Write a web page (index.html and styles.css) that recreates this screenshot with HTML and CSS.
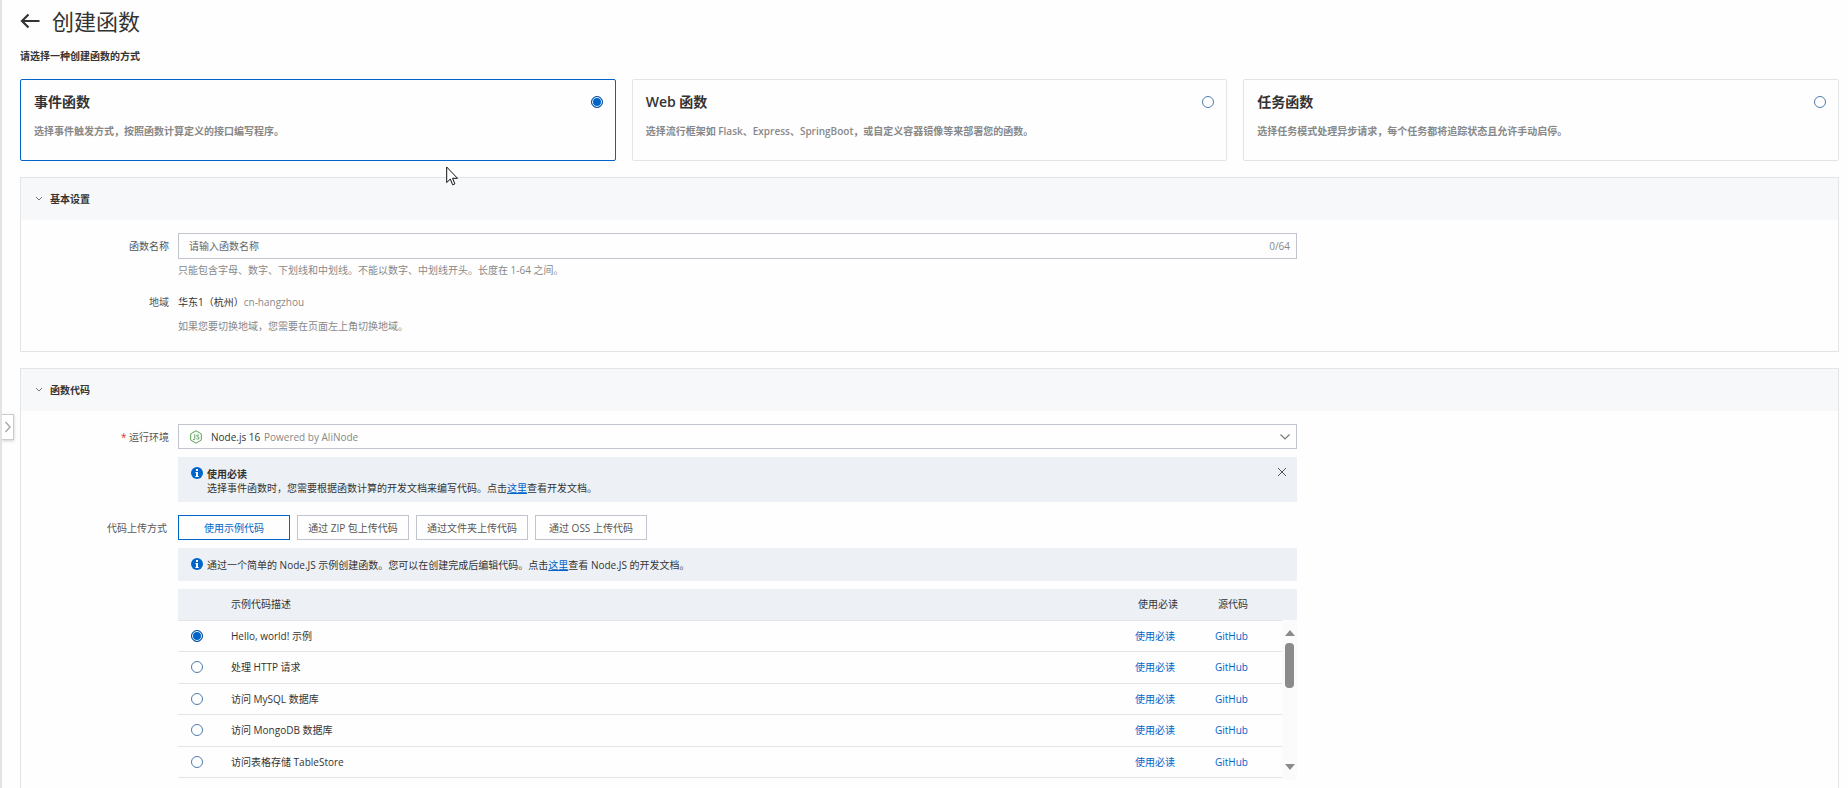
FILE: index.html
```html
<!DOCTYPE html>
<html lang="zh-CN">
<head>
<meta charset="utf-8">
<title>创建函数</title>
<link rel="stylesheet" href="styles.css">
</head>
<body>
<div class="page">
  <button class="drawer-toggle" type="button" aria-label="展开侧栏">
    <svg width="8" height="12" viewBox="0 0 8 12"><path d="M1.500 1l4.500 5-4.500 5" fill="none" stroke="#aaa" stroke-width="1.500"/></svg>
  </button>
  <main class="content">
    <header class="page-header">
      <a class="back" href="#" aria-label="返回">
        <svg width="20" height="18" viewBox="0 0 20 18"><path d="M8.500 2.500L2 9l6.500 6.500M2 9h17.500" fill="none" stroke="#333" stroke-width="2.200"/></svg>
      </a>
      <h1>创建函数</h1>
    </header>
    <p class="lead" id="lead">请选择一种创建函数的方式</p>

    <div class="cards" role="radiogroup" aria-labelledby="lead">
      <label class="card card-selected">
        <span class="card-head"><span class="card-title">事件函数</span><input class="radio" type="radio" name="kind" checked></span>
        <span class="card-desc">选择事件触发方式，按照函数计算定义的接口编写程序。</span>
      </label>
      <label class="card">
        <span class="card-head"><span class="card-title">Web 函数</span><input class="radio" type="radio" name="kind"></span>
        <span class="card-desc">选择流行框架如 Flask、Express、SpringBoot，或自定义容器镜像等来部署您的函数。</span>
      </label>
      <label class="card">
        <span class="card-head"><span class="card-title">任务函数</span><input class="radio" type="radio" name="kind"></span>
        <span class="card-desc">选择任务模式处理异步请求，每个任务都将追踪状态且允许手动启停。</span>
      </label>
    </div>

    <section class="panel">
      <h2 class="panel-title">
        <svg width="8" height="6" viewBox="0 0 8 6"><path d="M1 1l3 3 3-3" fill="none" stroke="#777"/></svg>
        基本设置
      </h2>
      <div class="panel-body">
        <div class="row">
          <label class="label" for="fn-name">函数名称</label>
          <div class="control">
            <div class="textbox">
              <input id="fn-name" type="text" placeholder="请输入函数名称">
              <span class="count">0/64</span>
            </div>
            <p class="hint">只能包含字母、数字、下划线和中划线。不能以数字、中划线开头。长度在 1-64 之间。</p>
          </div>
        </div>
        <div class="row row-region">
          <span class="label">地域</span>
          <div class="control">
            <p class="region">华东1（杭州）<span class="muted">cn-hangzhou</span></p>
            <p class="hint">如果您要切换地域，您需要在页面左上角切换地域。</p>
          </div>
        </div>
      </div>
    </section>

    <section class="panel">
      <h2 class="panel-title">
        <svg width="8" height="6" viewBox="0 0 8 6"><path d="M1 1l3 3 3-3" fill="none" stroke="#777"/></svg>
        函数代码
      </h2>
      <div class="panel-body">
        <div class="row">
          <label class="label" for="runtime"><span class="required">*</span> 运行环境</label>
          <div class="control">
            <div class="selectbox">
              <select id="runtime"><option>Node.js 16</option></select>
              <span class="select-icon"><svg width="14" height="14" viewBox="0 0 14 14" fill="none" stroke="#5fa35a"><path d="M7 .8l5.300 3.100v6.200L7 13.200 1.700 10.100V3.900z"/><path d="M5.800 4.200v4.600q0 1.400-1.800.8M10 5.200q-2.400-.8-2.400.6c0 1.400 2.600.7 2.600 2.200 0 1.400-2 1.300-2.800.7"/></svg></span>
              <span class="select-note muted">Powered by AliNode</span>
              <span class="select-arrow"><svg width="12" height="8" viewBox="0 0 12 8"><path d="M1.500 1.500L6 6l4.500-4.500" fill="none" stroke="#777" stroke-width="1.200"/></svg></span>
            </div>
            <div class="notice notice-tall">
              <svg class="info" width="12" height="12" viewBox="0 0 12 12"><circle cx="6" cy="6" r="6" fill="#0064c8"/><path d="M5 2h2v2H5zM4.500 5H7v4h.7v1H4.300V9H5V6h-.5z" fill="#fff"/></svg>
              <div class="notice-text"><strong>使用必读</strong><br>选择事件函数时，您需要根据函数计算的开发文档来编写代码。点击<a class="doc" href="#">这里</a>查看开发文档。</div>
              <button class="close" type="button" aria-label="关闭"><svg width="10" height="10" viewBox="0 0 10 10"><path d="M1 1l8 8M9 1L1 9" fill="none" stroke="#555"/></svg></button>
            </div>
          </div>
        </div>
        <div class="row row-upload">
          <span class="label label-wide">代码上传方式</span>
          <div class="control">
            <div class="tabs">
              <button class="tab tab-active" type="button">使用示例代码</button>
              <button class="tab" type="button">通过 ZIP 包上传代码</button>
              <button class="tab" type="button">通过文件夹上传代码</button>
              <button class="tab" type="button">通过 OSS 上传代码</button>
            </div>
            <div class="notice">
              <svg class="info" width="12" height="12" viewBox="0 0 12 12"><circle cx="6" cy="6" r="6" fill="#0064c8"/><path d="M5 2h2v2H5zM4.500 5H7v4h.7v1H4.300V9H5V6h-.5z" fill="#fff"/></svg>
              <div class="notice-text">通过一个简单的 Node.JS 示例创建函数。您可以在创建完成后编辑代码。点击<a class="doc" href="#">这里</a>查看 Node.JS 的开发文档。</div>
            </div>
            <div class="table-wrap">
              <table class="samples">
                <thead><tr><th class="pick"></th><th>示例代码描述</th><th class="read">使用必读</th><th class="source">源代码</th></tr></thead>
                <tbody>
                  <tr><td class="pick"><input class="radio" type="radio" name="sample" id="s1" checked></td><td><label for="s1">Hello, world! 示例</label></td><td><a href="#">使用必读</a></td><td><a href="#">GitHub</a></td></tr>
                  <tr><td class="pick"><input class="radio" type="radio" name="sample" id="s2"></td><td><label for="s2">处理 HTTP 请求</label></td><td><a href="#">使用必读</a></td><td><a href="#">GitHub</a></td></tr>
                  <tr><td class="pick"><input class="radio" type="radio" name="sample" id="s3"></td><td><label for="s3">访问 MySQL 数据库</label></td><td><a href="#">使用必读</a></td><td><a href="#">GitHub</a></td></tr>
                  <tr><td class="pick"><input class="radio" type="radio" name="sample" id="s4"></td><td><label for="s4">访问 MongoDB 数据库</label></td><td><a href="#">使用必读</a></td><td><a href="#">GitHub</a></td></tr>
                  <tr><td class="pick"><input class="radio" type="radio" name="sample" id="s5"></td><td><label for="s5">访问表格存储 TableStore</label></td><td><a href="#">使用必读</a></td><td><a href="#">GitHub</a></td></tr>
                </tbody>
              </table>
              <div class="scrollbar" aria-hidden="true">
                <svg width="10" height="6" viewBox="0 0 10 6"><path d="M5 0l5 6H0z" fill="#8b8b8b"/></svg>
                <span class="thumb"></span>
                <svg class="arrow-down" width="10" height="6" viewBox="0 0 10 6"><path d="M5 6l5-6H0z" fill="#8b8b8b"/></svg>
              </div>
            </div>
          </div>
        </div>
      </div>
    </section>
  </main>
  <svg class="pointer" width="13" height="20" viewBox="0 0 13 20"><path d="M.7 1v15.500l3.600-3.400 2.400 5.700 2.200-1-2.400-5.500h5z" fill="#fff" stroke="#111"/></svg>
</div>
</body>
</html>
```
FILE: styles.css
```css
* {
  box-sizing: border-box;
}

body {
  margin: 0;
  background: #fefefe;
  color: #333;
  font: 10px/14px "Open Sans", "Noto Sans CJK SC", sans-serif;
}

h1, h2, p {
  margin: 0;
}

button, input, select {
  color: inherit;
  font: inherit;
}

a {
  color: #0064c8;
  text-decoration: none;
}

.muted {
  color: #888;
}

.page {
  position: relative;
  height: 100vh;
  overflow: hidden;
  border-left: 2px solid #e3e3e3;
}

.drawer-toggle {
  position: absolute;
  top: 414px;
  left: 0;
  display: grid;
  place-items: center;
  width: 12px;
  height: 26px;
  padding: 0;
  border: 1px solid #ccc;
  border-left: 0;
  background: #fff;
  box-shadow: 0 1px 3px #0003;
}

.pointer {
  position: absolute;
  top: 166px;
  left: 444px;
}

.content {
  padding: 5px 9px 0 18px;
}

.page-header {
  display: flex;
  align-items: center;
  gap: 12px;
  height: 32px;
}

.back {
  display: flex;
}

h1 {
  font-size: 22px;
  font-weight: 400;
  line-height: 30px;
}

.lead {
  margin: 12px 0 16px;
  font-weight: 600;
}

.cards {
  display: grid;
  grid-template-columns: repeat(3, 1fr);
  gap: 16px;
  margin-bottom: 16px;
}

.card {
  display: block;
  height: 82px;
  padding: 12px;
  padding-left: 13px;
  border: 1px solid #e3e4e6;
  border-radius: 2px;
}

.card-selected {
  border-color: #0064c8;
}

.card-head {
  display: flex;
  align-items: center;
  justify-content: space-between;
  margin-bottom: 12px;
}

.card-title {
  font-size: 14px;
  font-weight: 600;
  line-height: 20px;
}

.card-desc {
  display: block;
  color: #888;
  font-weight: 600;
}

.radio {
  appearance: none;
  width: 12px;
  height: 12px;
  margin: 0;
  border: 1px solid #4f7cac;
  border-radius: 50%;
  background: #fff;
}

.radio:checked {
  border-color: #0050a0;
  background: #0064c8;
  box-shadow: inset 0 0 0 1px #fff;
}

.panel {
  margin-bottom: 16px;
  border: 1px solid #e3e4e6;
}

.panel-title {
  display: flex;
  align-items: center;
  gap: 7px;
  height: 42px;
  padding-left: 14px;
  background: #f7f8fa;
  font-size: 10px;
  font-weight: 700;
}

.panel-body {
  padding: 13px 0 18px;
}

.row {
  display: grid;
  grid-template-columns: 157px 1119fr 541fr;
}

.label {
  padding-right: 9px;
  color: #555;
  line-height: 26px;
  text-align: right;
}

.label-wide {
  padding-right: 11px;
}

.required {
  color: #d93026;
}

.textbox {
  display: flex;
  align-items: center;
  height: 26px;
  padding: 0 6px 0 10px;
  border: 1px solid #c0c4cc;
}

.textbox input {
  flex: 1;
  min-width: 0;
  padding: 0;
  border: 0;
  outline: 0;
  background: none;
}

.textbox input::placeholder {
  color: #666;
}

.count {
  color: #888;
}

.hint {
  margin-top: 4px;
  color: #888;
}

.row-region {
  margin-top: 12px;
}

.region {
  line-height: 26px;
}

.selectbox {
  position: relative;
}

.selectbox select {
  display: block;
  appearance: none;
  width: 100%;
  height: 25px;
  padding: 0 32px;
  border: 1px solid #c0c4cc;
  border-radius: 0;
  background: #fefefe;
}

.select-icon,
.select-note,
.select-arrow {
  position: absolute;
  top: 0;
  display: flex;
  align-items: center;
  height: 25px;
  pointer-events: none;
}

.select-icon {
  left: 11px;
}

.select-note {
  left: 86px;
}

.select-arrow {
  right: 6px;
}

.notice {
  display: flex;
  align-items: flex-start;
  gap: 4px;
  margin-top: 8px;
  padding: 10px 10px 9px 13px;
  background: #edf1f6;
}

.notice-tall {
  padding-bottom: 7px;
}

.notice-text {
  flex: 1;
}

.info {
  flex: none;
}

.doc {
  text-decoration: underline;
}

.close {
  display: flex;
  padding: 0;
  border: 0;
  background: none;
}

.row-upload {
  margin-top: 13px;
}

.tabs {
  display: flex;
  gap: 7px;
}

.tab {
  width: 112px;
  height: 25px;
  padding: 0;
  border: 1px solid #c0c4cc;
  background: #fefefe;
  color: #555;
}

.tab-active {
  border-color: #0064c8;
  color: #0064c8;
}

.table-wrap {
  position: relative;
  margin-top: 8px;
}

.samples {
  width: 100%;
  border-collapse: collapse;
  table-layout: fixed;
}

.samples th,
.samples td {
  height: 31px;
  padding: 0;
  border-bottom: 1px solid #e3e4e6;
  text-align: left;
}

.samples th {
  background: #edf1f6;
  font-weight: 400;
}

.samples tbody tr:nth-child(even) td {
  height: 32px;
}

.samples .pick {
  width: 53px;
  padding-left: 13px;
}

.samples td .radio {
  display: block;
}

.samples .read {
  width: 80px;
  padding-left: 3px;
}

.samples .source {
  width: 82px;
  padding-left: 3px;
}

.scrollbar {
  position: absolute;
  top: 31px;
  right: 0;
  display: flex;
  flex-direction: column;
  align-items: center;
  width: 15px;
  height: 160px;
  padding: 10px 0;
  background: #fbfbfb;
}

.thumb {
  width: 9px;
  height: 45px;
  margin-top: 7px;
  border-radius: 4px;
  background: #8b8b8b;
}

.arrow-down {
  margin-top: auto;
}
```
